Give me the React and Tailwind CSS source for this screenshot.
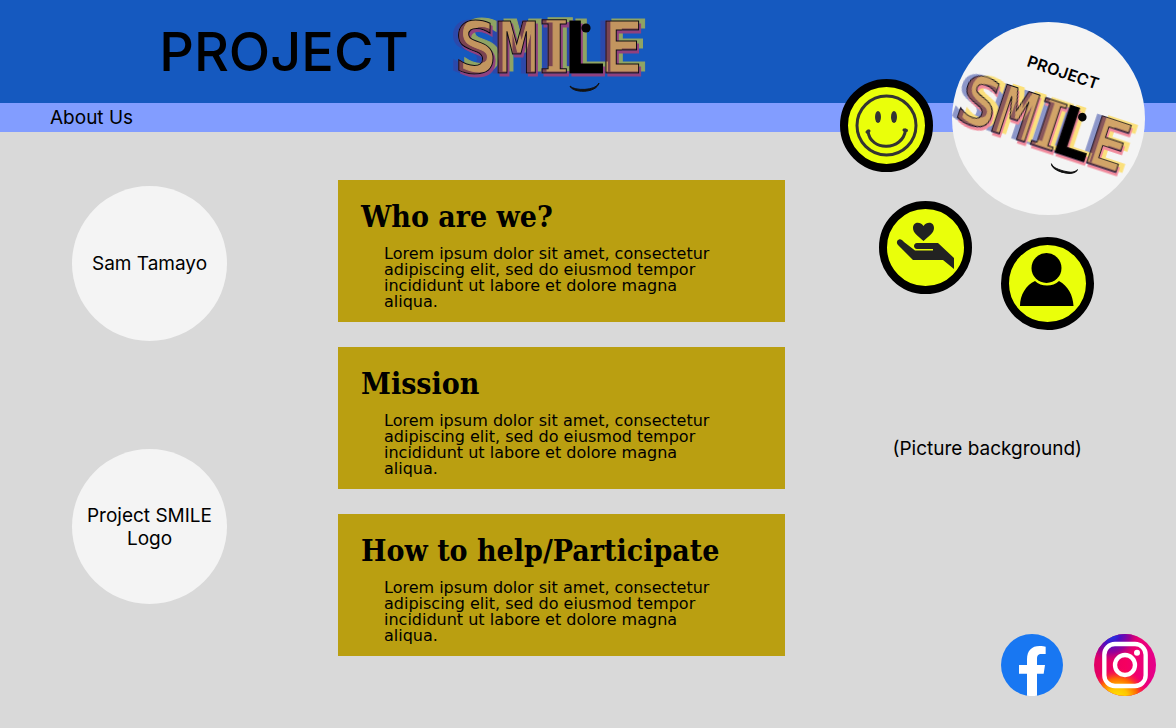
import React from "react";

const LOREM =
  "Lorem ipsum dolor sit amet, consectetur adipiscing elit, sed do eiusmod tempor incididunt ut labore et dolore magna aliqua.";

const SECTIONS = ["Who are we?", "Mission", "How to help/Participate"];

const MONO = "'DejaVu Sans Mono', monospace";

/* Letters of the SMILE wordmark; the filter adds its offset colour layers. */
const LETTERS = [
  { char: "S", x: -5, family: MONO },
  { char: "M", x: 36, family: MONO },
  { char: "I", x: 80, family: "'DejaVu Serif Condensed', 'DejaVu Serif', serif" },
  { char: "L", x: 103, family: MONO, solid: true },
  { char: "E", x: 141, family: MONO },
];

function Layer({ color, dx, dy, name }) {
  return (
    <>
      <feFlood floodColor={color} result={`${name}-color`} />
      <feOffset in="SourceAlpha" dx={dx} dy={dy} result={`${name}-shape`} />
      <feComposite in={`${name}-color`} in2={`${name}-shape`} operator="in" result={name} />
    </>
  );
}

function SmileMark({ id, left, right, below, face, ridge }) {
  return (
    <g>
      <defs>
        <filter id={id} x="-20" y="-5" width="230" height="110" filterUnits="userSpaceOnUse" colorInterpolationFilters="sRGB">
          <Layer name="left" color={left} dx="-5" dy="0" />
          <Layer name="right" color={right} dx="6" dy="-2" />
          <Layer name="below" color={below} dx="2" dy="3" />
          <feOffset in="SourceAlpha" dx="5" dy="-2" result="lit" />
          <feComposite in="SourceAlpha" in2="lit" operator="out" result="edge" />
          <feFlood floodColor={ridge} result="ridge-color" />
          <feComposite in="ridge-color" in2="edge" operator="in" result="ridge" />
          <feBlend in="ridge" in2="SourceGraphic" mode="multiply" result="front" />
          <feMerge>
            <feMergeNode in="left" />
            <feMergeNode in="right" />
            <feMergeNode in="below" />
            <feMergeNode in="front" />
          </feMerge>
        </filter>
      </defs>
      <g filter={`url(#${id})`} fontWeight="700" fontSize="72" strokeWidth="1">
        {LETTERS.map((l) => (
          <text
            key={l.char}
            x={l.x}
            y="73"
            fontFamily={l.family}
            fill={l.solid ? "#000" : face}
            stroke={l.solid ? "#000" : "#0c0c14"}
          >
            {l.char}
          </text>
        ))}
      </g>
      <circle cx="127" cy="28" r="4.6" fill="#050505" />
      <path d="M111 86 C113 93 137 94 140 83 C137 91 115 91 111 86Z" fill="#111" stroke="#111" strokeWidth="1" />
    </g>
  );
}

function Badge({ label, className, children }) {
  return (
    <a
      href="#"
      aria-label={label}
      className={`absolute block h-[93px] w-[93px] rounded-full border-8 border-black bg-[#eaff0a] ${className}`}
    >
      <svg viewBox="0 0 77 77" className="h-full w-full" aria-hidden="true">
        {children}
      </svg>
    </a>
  );
}

function Disc({ children }) {
  return (
    <div className="flex h-[155px] w-[155px] items-center justify-center rounded-full bg-[#f4f4f4] px-3 text-center">
      {children}
    </div>
  );
}

export default function App() {
  return (
    <div className="relative flex min-h-screen flex-col bg-[#d9d9d9] font-['Inter',sans-serif] text-[19px] leading-[23px] text-black">
      <header className="flex h-[103px] items-center bg-[#1559bf] pl-[147px]">
        <h1 className="flex items-center gap-8">
          <span className="w-[274px] text-center text-[54px] font-medium leading-none">PROJECT</span>
          <svg viewBox="-6 0 200 103" className="h-[103px] w-[200px]" role="img" aria-label="SMILE">
            <SmileMark id="mark-dark" left="#2b49ab" right="#8fa463" below="#90417f" ridge="#a072d8" face="#c2955f" />
          </svg>
        </h1>
      </header>

      <nav className="flex h-[29px] items-center bg-[#829dff] pl-[50px]">
        <a href="#about">About Us</a>
      </nav>

      <main id="about" className="grid grow grid-cols-[338fr_447fr_391fr]">
        <div className="flex flex-col items-start gap-[108px] pl-[72px] pt-[54px]">
          <Disc>Sam Tamayo</Disc>
          <Disc>Project SMILE Logo</Disc>
        </div>

        <div className="flex flex-col gap-[25px] py-12">
          {SECTIONS.map((title) => (
            <section key={title} className="bg-[#ba9f11] pb-3 pl-[23px] pt-4">
              <h2 className="font-['DejaVu_Serif_Condensed','DejaVu_Serif',serif] text-[30px] font-bold leading-[42px]">
                {title}
              </h2>
              <p className="ml-[23px] mt-2 max-w-[335px] font-['DejaVu_Sans',sans-serif] text-[16px] leading-[16px]">
                {LOREM}
              </p>
            </section>
          ))}
        </div>

        <div className="flex flex-col items-end justify-between pb-8 pr-5 pt-[305px]">
          <p className="pr-[74px]">(Picture background)</p>
          <div className="flex gap-[31px]">
            <a href="#" aria-label="Facebook" className="block h-[62px] w-[62px]">
              <svg viewBox="0 0 186 186" className="h-full w-full" aria-hidden="true">
                <circle cx="93" cy="93" r="93" fill="#1877f2" />
                <path
                  d="M78 185V119H54V93H78V76C78 50 92 36 116 36C124 36 130 37 134 38V60H122C111 60 108 66 108 74V93H132L128 119H108V185Q93 187 78 185Z"
                  fill="#fff"
                />
              </svg>
            </a>
            <a href="#" aria-label="Instagram" className="block h-[62px] w-[62px]">
              <svg viewBox="0 0 186 186" className="h-full w-full" aria-hidden="true">
                <defs>
                  <linearGradient id="ig-base" x1="0" y1="0" x2="1" y2="0">
                    <stop offset="0" stopColor="#e00065" />
                    <stop offset="0.5" stopColor="#f5005f" />
                    <stop offset="1" stopColor="#e5008c" />
                  </linearGradient>
                  <radialGradient id="ig-warm" cx="0.38" cy="1.04" r="0.5">
                    <stop offset="0" stopColor="#ffe600" />
                    <stop offset="0.35" stopColor="#ffc400" />
                    <stop offset="0.65" stopColor="#ff6a00" />
                    <stop offset="1" stopColor="#ff0055" stopOpacity="0" />
                  </radialGradient>
                  <radialGradient id="ig-cool" cx="0.26" cy="-0.02" r="0.5">
                    <stop offset="0" stopColor="#0050ff" />
                    <stop offset="0.35" stopColor="#4a0fc4" />
                    <stop offset="0.65" stopColor="#9a0095" />
                    <stop offset="1" stopColor="#e00070" stopOpacity="0" />
                  </radialGradient>
                </defs>
                <circle cx="93" cy="93" r="93" fill="url(#ig-base)" />
                <circle cx="93" cy="93" r="93" fill="url(#ig-warm)" />
                <circle cx="93" cy="93" r="93" fill="url(#ig-cool)" />
                <g fill="none" stroke="#fff" strokeWidth="13">
                  <rect x="31" y="30" width="124" height="126" rx="32" />
                  <circle cx="93" cy="93" r="30" />
                </g>
                <circle cx="129" cy="56" r="9" fill="#fff" />
              </svg>
            </a>
          </div>
        </div>
      </main>

      <div className="absolute right-[31px] top-[22px] h-[193px] w-[193px] rounded-full bg-[#f4f4f4]">
        <svg viewBox="0 0 193 193" className="h-full w-full overflow-visible" role="img" aria-label="Project SMILE">
          <text transform="translate(74 44) rotate(18.5)" fontFamily="Inter, sans-serif" fontWeight="600" fontSize="16">
            PROJECT
          </text>
          <g transform="translate(18 103) rotate(18.3) scale(0.93) translate(-15 -74)">
            <SmileMark id="mark-light" left="#8c96c9" right="#fbe07b" below="#f18a9c" ridge="#a887e0" face="#d2a468" />
          </g>
        </svg>
      </div>

      <Badge label="Smile" className="right-[243px] top-[79px]">
        <g fill="none" stroke="#333" strokeWidth="3" strokeLinecap="round">
          <circle cx="38.5" cy="38.5" r="29.5" />
          <path d="M20 44C22 65 55 64 57.500 43" />
          <path d="M19 45L21 44M56 43L58.500 43.500" />
        </g>
        <ellipse cx="30" cy="30" rx="3" ry="6" fill="#333" />
        <ellipse cx="46" cy="30" rx="3" ry="6" fill="#333" />
      </Badge>

      <Badge label="Donate" className="right-[204px] top-[201px]">
        <g fill="#222">
          <path d="M36.5 32C31 27 26 24 26 19C26 13 33 12 36.5 17C40 12 47 13 47 19C47 24 42 27 36.5 32Z" />
          <path d="M12 30.5C14 30 15 31 17 33L28 41.500H46V40H30C26 40 26 34 30 34H51L67 49V60L56 51H26L11 36C9 34 10 31 12 30.500Z" />
        </g>
      </Badge>

      <Badge label="Profile" className="right-[82px] top-[237px]">
        <circle cx="37.500" cy="23" r="15" />
        <path d="M11 61C11 50 17 40 26 36C32 42 44 42 50 36C59 41 64 50 64.500 61Z" />
      </Badge>
    </div>
  );
}
